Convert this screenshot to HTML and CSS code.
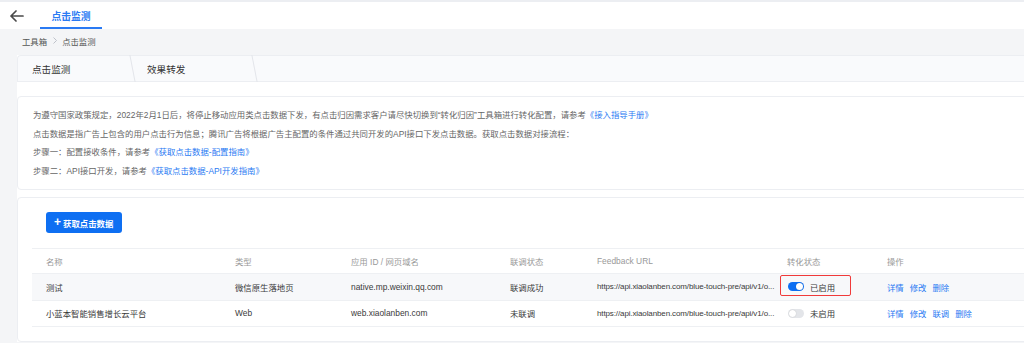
FILE: index.html
```html
<!DOCTYPE html>
<html lang="zh-CN">
<head>
    <meta charset="UTF-8">
    <title>点击监测</title>
    <link rel="stylesheet" href="styles.css">
</head>
<body>
    <div class="topLine"></div>
    <div class="header">
        <span class="header_back">
            <svg width="15" height="12" viewBox="0 0 15 12"><path d="M14 6H2M7 1L2 6l5 5" fill="none" stroke="#4a4a4a" stroke-width="1.7" stroke-linecap="round" stroke-linejoin="round"/></svg>
        </span>
        <span class="header_tab">点击监测</span>
    </div>
    <div class="crumb">
        <span>工具箱</span>
        <svg class="crumb_sep" width="4" height="7" viewBox="0 0 4 7"><path d="M0.5 0.5L3.5 3.5L0.5 6.5" fill="none" stroke="#b8bcc4" stroke-width="0.9"/></svg>
        <span>点击监测</span>
    </div>

    <div class="panel">
        <div class="tabs">
            <div class="tabs_item tabs_first">点击监测</div>
            <div class="tabs_item tabs_second">效果转发</div>
        </div>
        <div class="tabs_space"></div>

        <div class="notice">
            <p>为遵守国家政策规定，2022年2月1日后，将停止移动应用类点击数据下发，有点击归因需求客户请尽快切换到“转化归因”工具箱进行转化配置，请参考<a class="link">《接入指导手册》</a></p>
            <p>点击数据是指广告上包含的用户点击行为信息；腾讯广告将根据广告主配置的条件通过共同开发的API接口下发点击数据。获取点击数据对接流程：</p>
            <p>步骤一：配置接收条件，请参考<a class="link">《获取点击数据-配置指南》</a></p>
            <p>步骤二：API接口开发，请参考<a class="link">《获取点击数据-API开发指南》</a></p>
        </div>
        <div class="card_space"></div>

        <div class="listCard">
            <button class="addBtn"><span class="addBtn_plus">+</span>获取点击数据</button>
            <table class="list">
                <colgroup>
                    <col style="width:193px">
                    <col style="width:116px">
                    <col style="width:159px">
                    <col style="width:87px">
                    <col style="width:190px">
                    <col style="width:100px">
                    <col style="width:213px">
                </colgroup>
                <thead>
                    <tr>
                        <th>名称</th>
                        <th>类型</th>
                        <th>应用 ID / 网页域名</th>
                        <th>联调状态</th>
                        <th>Feedback URL</th>
                        <th>转化状态</th>
                        <th>操作</th>
                    </tr>
                </thead>
                <tbody>
                    <tr class="list_hover">
                        <td>测试</td>
                        <td>微信原生落地页</td>
                        <td>native.mp.weixin.qq.com</td>
                        <td>联调成功</td>
                        <td class="list_url">https://api.xiaolanben.com/blue-touch-pre/api/v1/o...</td>
                        <td class="list_state">
                            <span class="state">
                                <span class="switch switch_on"></span><span>已启用</span>
                                <span class="mark"></span>
                            </span>
                        </td>
                        <td class="ops"><a>详情</a><a>修改</a><a>删除</a></td>
                    </tr>
                    <tr>
                        <td>小蓝本智能销售增长云平台</td>
                        <td>Web</td>
                        <td>web.xiaolanben.com</td>
                        <td>未联调</td>
                        <td class="list_url">https://api.xiaolanben.com/blue-touch-pre/api/v1/o...</td>
                        <td class="list_state">
                            <span class="state">
                                <span class="switch"></span><span>未启用</span>
                            </span>
                        </td>
                        <td class="ops"><a>详情</a><a>修改</a><a>联调</a><a>删除</a></td>
                    </tr>
                </tbody>
            </table>
        </div>
    </div>
</body>
</html>
```

FILE: styles.css
```css
html, body{
    margin: 0;
    padding: 0;
}
body{
    width: 1024px;
    height: 343px;
    overflow: hidden;
    background: #f4f5f7;
    font-family: "Liberation Sans", "Noto Sans CJK SC", sans-serif;
    font-size: 8.4px;
    color: #333;
}
p{margin: 0;}
a{cursor: pointer;}
.topLine{
    height: 2px;
    background: #eceef2;
}
.header{
    height: 27px;
    background: #fff;
    display: flex;
    align-items: stretch;
}
.header_back{
    width: 40px;
    display: flex;
    align-items: center;
    padding-left: 9px;
    box-sizing: border-box;
}
.header_tab{
    width: 62px;
    display: flex;
    align-items: center;
    justify-content: center;
    box-sizing: border-box;
    border-bottom: 2px solid #2a7af3;
    padding-top: 2px;
    color: #2a7af3;
    font-size: 9.8px;
    font-weight: bold;
}
.crumb{
    height: 26px;
    padding-left: 22px;
    display: flex;
    align-items: center;
    padding-bottom: 3px;
    box-sizing: border-box;
    color: #555;
}
.crumb_sep{
    margin: 0 5px 0 6px;
}
.panel{
    margin-left: 17px;
    width: 1100px;
    background: #fff;
}
.tabs{
    height: 27px;
    box-sizing: border-box;
    display: flex;
    background: #f9fafc;
    border-top: 1px solid #eceef2;
    border-left: 1px solid #eceef2;
    border-bottom: 1px solid #eceef2;
    border-top-left-radius: 4px;
}
.tabs_item{
    position: relative;
    display: flex;
    align-items: center;
    padding-left: 14px;
    box-sizing: border-box;
    font-size: 9.6px;
    color: #333;
}
.tabs_item::after{
    content: "";
    position: absolute;
    right: 0;
    top: -1px;
    bottom: -1px;
    border-right: 1px solid #e3e5ea;
    transform: skewX(11deg);
}
.tabs_first{width: 115px;}
.tabs_second{width: 122px;}
.tabs_space{height: 14px;}
.notice{
    height: 94px;
    box-sizing: border-box;
    border: 1px solid #eceef2;
    border-radius: 4px;
    padding: 9px 15px;
    line-height: 18.7px;
    color: #666;
}
.link{color: #2a7af3;}
.card_space{height: 7px;}
.listCard{
    height: 145px;
    box-sizing: border-box;
    border: 1px solid #eceef2;
    border-radius: 4px;
    padding: 14px 14px 0 14px;
}
.addBtn{
    display: flex;
    align-items: center;
    margin-left: 14px;
    width: 76px;
    height: 21px;
    padding: 0 0 0 8px;
    border: none;
    border-radius: 3px;
    background: #0e6ff2;
    color: #fff;
    font-family: inherit;
    font-size: 8.4px;
    font-weight: bold;
}
.addBtn_plus{
    font-size: 12px;
    font-weight: bold;
    margin-right: 2px;
    line-height: 1;
    margin-top: -1px;
}
.list{
    margin-top: 15px;
    border-collapse: collapse;
    table-layout: fixed;
    width: 1058px;
}
.list th, .list td{
    text-align: left;
    padding: 0 1px 0 10px;
    border-bottom: 1px solid #eef0f3;
    white-space: nowrap;
    overflow: hidden;
}
.list th:first-child, .list td:first-child{padding-left: 14px;}
.list thead tr{border-top: 1px solid #eef0f3;}
.list th{
    height: 24px;
    font-weight: normal;
    color: #999;
}
.list td{
    height: 25.5px;
    color: #3a3a3a;
}
.list_hover td{background: #f7f8fa;}
.list .list_url{
    font-size: 8px;
    letter-spacing: -0.12px;
}
.list .list_state{overflow: visible;}
.state{
    position: relative;
    display: inline-flex;
    align-items: center;
    margin-left: 1px;
}
.switch{
    position: relative;
    width: 16px;
    height: 9px;
    border-radius: 5px;
    background: #e3e5e9;
    margin-right: 6px;
}
.switch::after{
    content: "";
    position: absolute;
    left: 1px;
    top: 1px;
    width: 7px;
    height: 7px;
    border-radius: 50%;
    background: #fff;
    box-shadow: 0 0 1px rgba(0,0,0,0.25);
}
.switch_on{background: #0e6ff2;}
.switch_on::after{left: 8px;}
.mark{
    position: absolute;
    left: -8px;
    top: -6px;
    width: 69px;
    height: 19px;
    border: 1.5px solid #f03a3a;
    border-radius: 2px;
}
.ops a{
    color: #2a7af3;
    margin-right: 6px;
}
```
